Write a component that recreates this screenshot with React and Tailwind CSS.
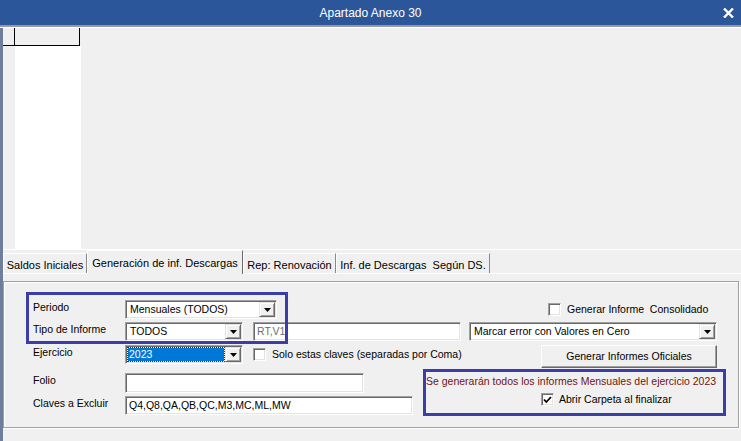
import React from "react";

const sunken =
  "border border-t-[#a0a0a0] border-l-[#a0a0a0] border-b-white border-r-white shadow-[inset_1px_1px_0_#696969,inset_-1px_-1px_0_#e3e3e3] bg-white";

function Arrow() {
  return (
    <div className="w-[16px] h-full flex items-center justify-center bg-[#f0f0f0] border border-t-[#e3e3e3] border-l-[#e3e3e3] border-b-[#696969] border-r-[#696969] shadow-[inset_1px_1px_0_#fff,inset_-1px_-1px_0_#a0a0a0]">
      <svg width="7" height="4" viewBox="0 0 7 4">
        <path d="M0 0h7L3.5 4z" fill="#000" />
      </svg>
    </div>
  );
}

function Combo({ width, text, selected }) {
  return (
    <div className={`${sunken} ${width} h-[19px] flex p-[1px]`}>
      {selected ? (
        <div className="flex-1 flex items-center p-[1px]">
          <div className="flex-1 h-full flex items-center bg-[#0078d7] text-white pl-[1px] outline-1 outline-dotted outline-[#333]">
            {text}
          </div>
        </div>
      ) : (
        <div className="flex-1 flex items-center pl-[3px] whitespace-nowrap overflow-hidden">{text}</div>
      )}
      <Arrow />
    </div>
  );
}

function Check({ checked }) {
  return (
    <div className={`${sunken} w-[13px] h-[13px] flex items-center justify-center`}>
      {checked && (
        <svg width="9" height="8" viewBox="0 0 9 8">
          <polyline points="1,3.5 3.3,6 8,1" fill="none" stroke="#000" strokeWidth="1.8" />
        </svg>
      )}
    </div>
  );
}

function Label({ children }) {
  return <div className="w-[92px] h-full leading-[15px] whitespace-nowrap">{children}</div>;
}

function Tab({ children, active, width }) {
  if (active) {
    return (
      <div className={`${width} h-[24px] mb-[-1px] relative z-10 bg-[#f0f0f0] border-t border-l border-r border-t-white border-l-white border-r-[#696969] flex justify-center pt-[4px]`}>
        <span className="whitespace-pre">{children}</span>
      </div>
    );
  }
  return (
    <div className={`${width} h-[20px] border-t border-l border-r border-t-white border-l-white border-r-[#8a8a8a] flex justify-center pt-[3px]`}>
      <span className="whitespace-pre">{children}</span>
    </div>
  );
}

export default function App() {
  return (
    <div className="w-[741px] h-[441px] bg-[#f0f0f0] flex flex-col overflow-hidden font-['Liberation_Sans',Arial,sans-serif] text-[10.5px] text-black">
      <div className="h-[25px] bg-[#2b579a] relative flex items-center justify-center text-white text-[12px]">
        Apartado Anexo 30
        <svg className="absolute right-[7px] top-[8px]" width="11" height="10" viewBox="0 0 11 10">
          <path d="M1 0.5L10 9.5M10 0.5L1 9.5" stroke="#fff" strokeWidth="2.4" />
        </svg>
      </div>
      <div className="h-[2px] bg-[#9a9a9a]" />
      <div className="h-[1px] bg-white" />

      <div className="flex-1 flex flex-col border-l-[3px] border-[#6f7f9b]">
        {/* grid area */}
        <div className="h-[222px] flex border-b border-white">
          <div className="flex flex-col">
            <div className="flex h-[18px]">
              <div className="w-[12px] border-r border-b border-black" />
              <div className="w-[65px] border-r border-b border-black" />
            </div>
            <div className="flex flex-1">
              <div className="w-[12px]" />
              <div className="w-[66px] bg-white" />
            </div>
          </div>
        </div>

        {/* tabs */}
        <div className="h-[23px] flex items-end text-[11px]">
          <Tab width="w-[84px]">Saldos Iniciales</Tab>
          <Tab width="w-[156px]" active>Generación de inf. Descargas</Tab>
          <Tab width="w-[93px]">Rep: Renovación</Tab>
          <Tab width="w-[154px]">{"Inf. de Descargas  Según DS."}</Tab>
        </div>

        <div className="flex-1 border-t border-white pt-[7px]">
          <div className="relative w-[736px] h-[147px] border border-[#a0a0a0] shadow-[inset_1px_1px_0_#fff,1px_1px_0_#fff] pl-[29px] pr-[21px] pt-[18px] flex flex-col">
            {/* row 1 */}
            <div className="h-[19px] flex items-center">
              <Label>Periodo</Label>
              <Combo width="w-[152px]" text="Mensuales (TODOS)" />
              <div className="ml-[271px] flex items-center">
                <Check />
                <span className="ml-[6px] whitespace-pre">{"Generar Informe  Consolidado"}</span>
              </div>
            </div>

            {/* row 2 */}
            <div className="h-[19px] mt-[3px] flex items-center">
              <Label>Tipo de Informe</Label>
              <Combo width="w-[118px]" text="TODOS" />
              <div className={`${sunken} ml-[10px] w-[208px] h-[19px] flex items-center pl-[3px] text-[#6d6d6d]`}>RT,V1</div>
              <div className="ml-[8px]">
                <Combo width="w-[248px]" text="Marcar error con Valores en Cero" />
              </div>
            </div>

            {/* row 3 */}
            <div className="h-[19px] mt-[4px] flex items-start">
              <Label>Ejercicio</Label>
              <Combo width="w-[118px]" text="2023" selected />
              <div className="ml-[10px] h-full flex items-center">
                <Check />
                <span className="ml-[6px] whitespace-nowrap">Solo estas claves (separadas por Coma)</span>
              </div>
              <div className="ml-auto w-[176px] h-[23px] shrink-0 flex items-center justify-center bg-[#f0f0f0] border border-t-white border-l-white border-b-[#696969] border-r-[#696969] shadow-[inset_-1px_-1px_0_#a0a0a0]">
                Generar Informes Oficiales
              </div>
            </div>

            {/* row 4 */}
            <div className="h-[20px] mt-[9px] flex items-start">
              <Label>Folio</Label>
              <div className={`${sunken} w-[239px] h-[20px]`} />
              <div className="ml-[62px] leading-[16px] text-[#721313] whitespace-nowrap">
                Se generarán todos los informes Mensuales del ejercicio 2023
              </div>
            </div>

            {/* row 5 */}
            <div className="h-[19px] mt-[3px] flex items-start">
              <Label>Claves a Excluir</Label>
              <div className={`${sunken} w-[288px] h-[19px] flex items-center pl-[3px]`}>Q4,Q8,QA,QB,QC,M3,MC,ML,MW</div>
              <div className="ml-[128px] mt-[-4px] flex items-center">
                <Check checked />
                <span className="ml-[5px] whitespace-nowrap">Abrir Carpeta al finalizar</span>
              </div>
            </div>

            {/* annotation boxes */}
            <div className="absolute left-[22px] top-[10px] w-[262px] h-[52px] border-[3px] border-[#3b3ea6]" />
            <div className="absolute left-[419px] top-[87px] w-[303px] h-[47px] border-[3px] border-[#3b3ea6]" />
          </div>
        </div>
      </div>
    </div>
  );
}
